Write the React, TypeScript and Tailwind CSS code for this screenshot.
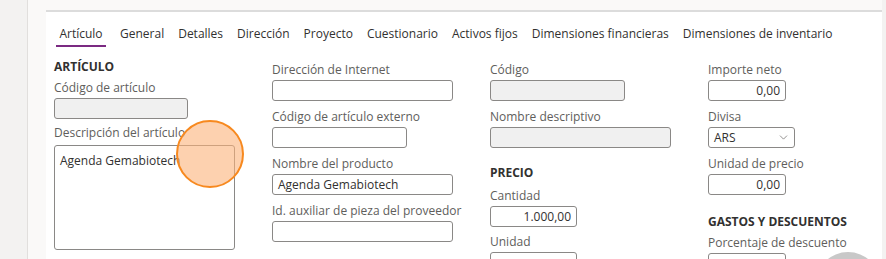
import React from "react"
import { ChevronDown } from "lucide-react"

const tabs = [
  "Artículo",
  "General",
  "Detalles",
  "Dirección",
  "Proyecto",
  "Cuestionario",
  "Activos fijos",
  "Dimensiones financieras",
  "Dimensiones de inventario",
]

interface FieldProps {
  label: string
  width: string
  value?: string
  disabled?: boolean
  right?: boolean
  className?: string
}

const Field: React.FC<FieldProps> = ({ label, width, value, disabled, right, className = "" }) => (
  <div className={`flex flex-col ${className}`}>
    <span className="text-[12px] leading-[16px] text-[#605e5c]">{label}</span>
    <div
      className={`mt-[2px] h-[21px] ${width} rounded-[3px] border border-[#8a8886] px-[5px] text-[12px] leading-[19px] text-[#323130] ${
        disabled ? "bg-[#f0f0f0]" : "bg-white"
      } ${right ? "text-right" : ""}`}
    >
      {value}
    </div>
  </div>
)

const Section: React.FC<{ title: string; className?: string }> = ({ title, className = "" }) => (
  <span className={`text-[12px] leading-[16px] font-bold text-[#323130] ${className}`}>{title}</span>
)

export default function App() {
  return (
    <div
      className="flex h-[259px] w-[886px] overflow-hidden bg-[#f3f2f1]"
      style={{ fontFamily: '"Open Sans", "Noto Sans", sans-serif' }}
    >
      <div className="w-[28px] shrink-0 border-r border-[#e1dfdd] bg-[#f3f2f1]" />
      <div className="w-[18px] shrink-0 bg-[#faf9f8]" />
      <div className="flex w-[836px] shrink-0 flex-col bg-[#faf9f8] pt-[10px]">
        <div className="relative flex-1 border-t-2 border-[#dcdcdc] bg-white pl-[7px]">
          <div className="flex gap-[14px] pl-[3px] pt-[13px]">
            {tabs.map((t, i) => (
              <div key={t} className="relative flex flex-col items-center">
                <span className="text-[12px] leading-[18px] text-[#323130]">{t}</span>
                {i === 0 && <div className="mt-[2px] h-[2px] w-[50px] bg-[#7b2a82]" />}
              </div>
            ))}
          </div>

          <div className="mt-[10px] grid grid-cols-[218px_218px_218px_180px] pl-[1px]">
            <div className="flex flex-col pt-[2px]">
              <Section title="ARTÍCULO" />
              <Field className="mt-[5px]" label="Código de artículo" width="w-[134px]" disabled />
              <div className="mt-[6px] flex flex-col">
                <span className="text-[12px] leading-[16px] text-[#605e5c]">Descripción del artículo</span>
                <div className="mt-[4px] h-[105px] w-[181px] rounded-[3px] border border-[#8a8886] bg-white px-[5px] pt-[6px] text-[12px] leading-[18px] text-[#323130]">
                  Agenda Gemabiotech
                </div>
              </div>
            </div>

            <div className="flex flex-col pt-[5px]">
              <Field label="Dirección de Internet" width="w-[181px]" />
              <Field className="mt-[8px]" label="Código de artículo externo" width="w-[135px]" />
              <Field className="mt-[8px]" label="Nombre del producto" width="w-[181px]" value="Agenda Gemabiotech" />
              <Field className="mt-[8px]" label="Id. auxiliar de pieza del proveedor" width="w-[181px]" />
            </div>

            <div className="flex flex-col pt-[5px]">
              <Field label="Código" width="w-[135px]" disabled />
              <Field className="mt-[8px]" label="Nombre descriptivo" width="w-[181px]" disabled />
              <Section className="mt-[17px]" title="PRECIO" />
              <Field className="mt-[7px]" label="Cantidad" width="w-[87px]" value="1.000,00" right />
              <Field className="mt-[7px]" label="Unidad" width="w-[87px]" />
            </div>

            <div className="flex flex-col pt-[5px]">
              <Field label="Importe neto" width="w-[78px]" value="0,00" right />
              <div className="mt-[8px] flex flex-col">
                <span className="text-[12px] leading-[16px] text-[#605e5c]">Divisa</span>
                <div className="mt-[2px] flex h-[21px] w-[87px] items-center justify-between rounded-[3px] border border-[#8a8886] bg-white pl-[5px] pr-[4px] text-[12px] text-[#323130]">
                  <span>ARS</span>
                  <ChevronDown className="h-[13px] w-[13px] text-[#605e5c]" strokeWidth={1.25} />
                </div>
              </div>
              <Field className="mt-[8px]" label="Unidad de precio" width="w-[78px]" value="0,00" right />
              <Section className="mt-[19px]" title="GASTOS Y DESCUENTOS" />
              <Field className="mt-[5px]" label="Porcentaje de descuento" width="w-[78px]" />
            </div>
          </div>

          <div className="absolute left-[130px] top-[108px] h-[68px] w-[68px] rounded-full border-2 border-[#f7891f] bg-[#fcb37a]/60" />
          <div className="absolute left-[770px] top-[240px] h-[64px] w-[64px] rounded-full bg-[#c8c8c8]" />
        </div>
      </div>
    </div>
  )
}
